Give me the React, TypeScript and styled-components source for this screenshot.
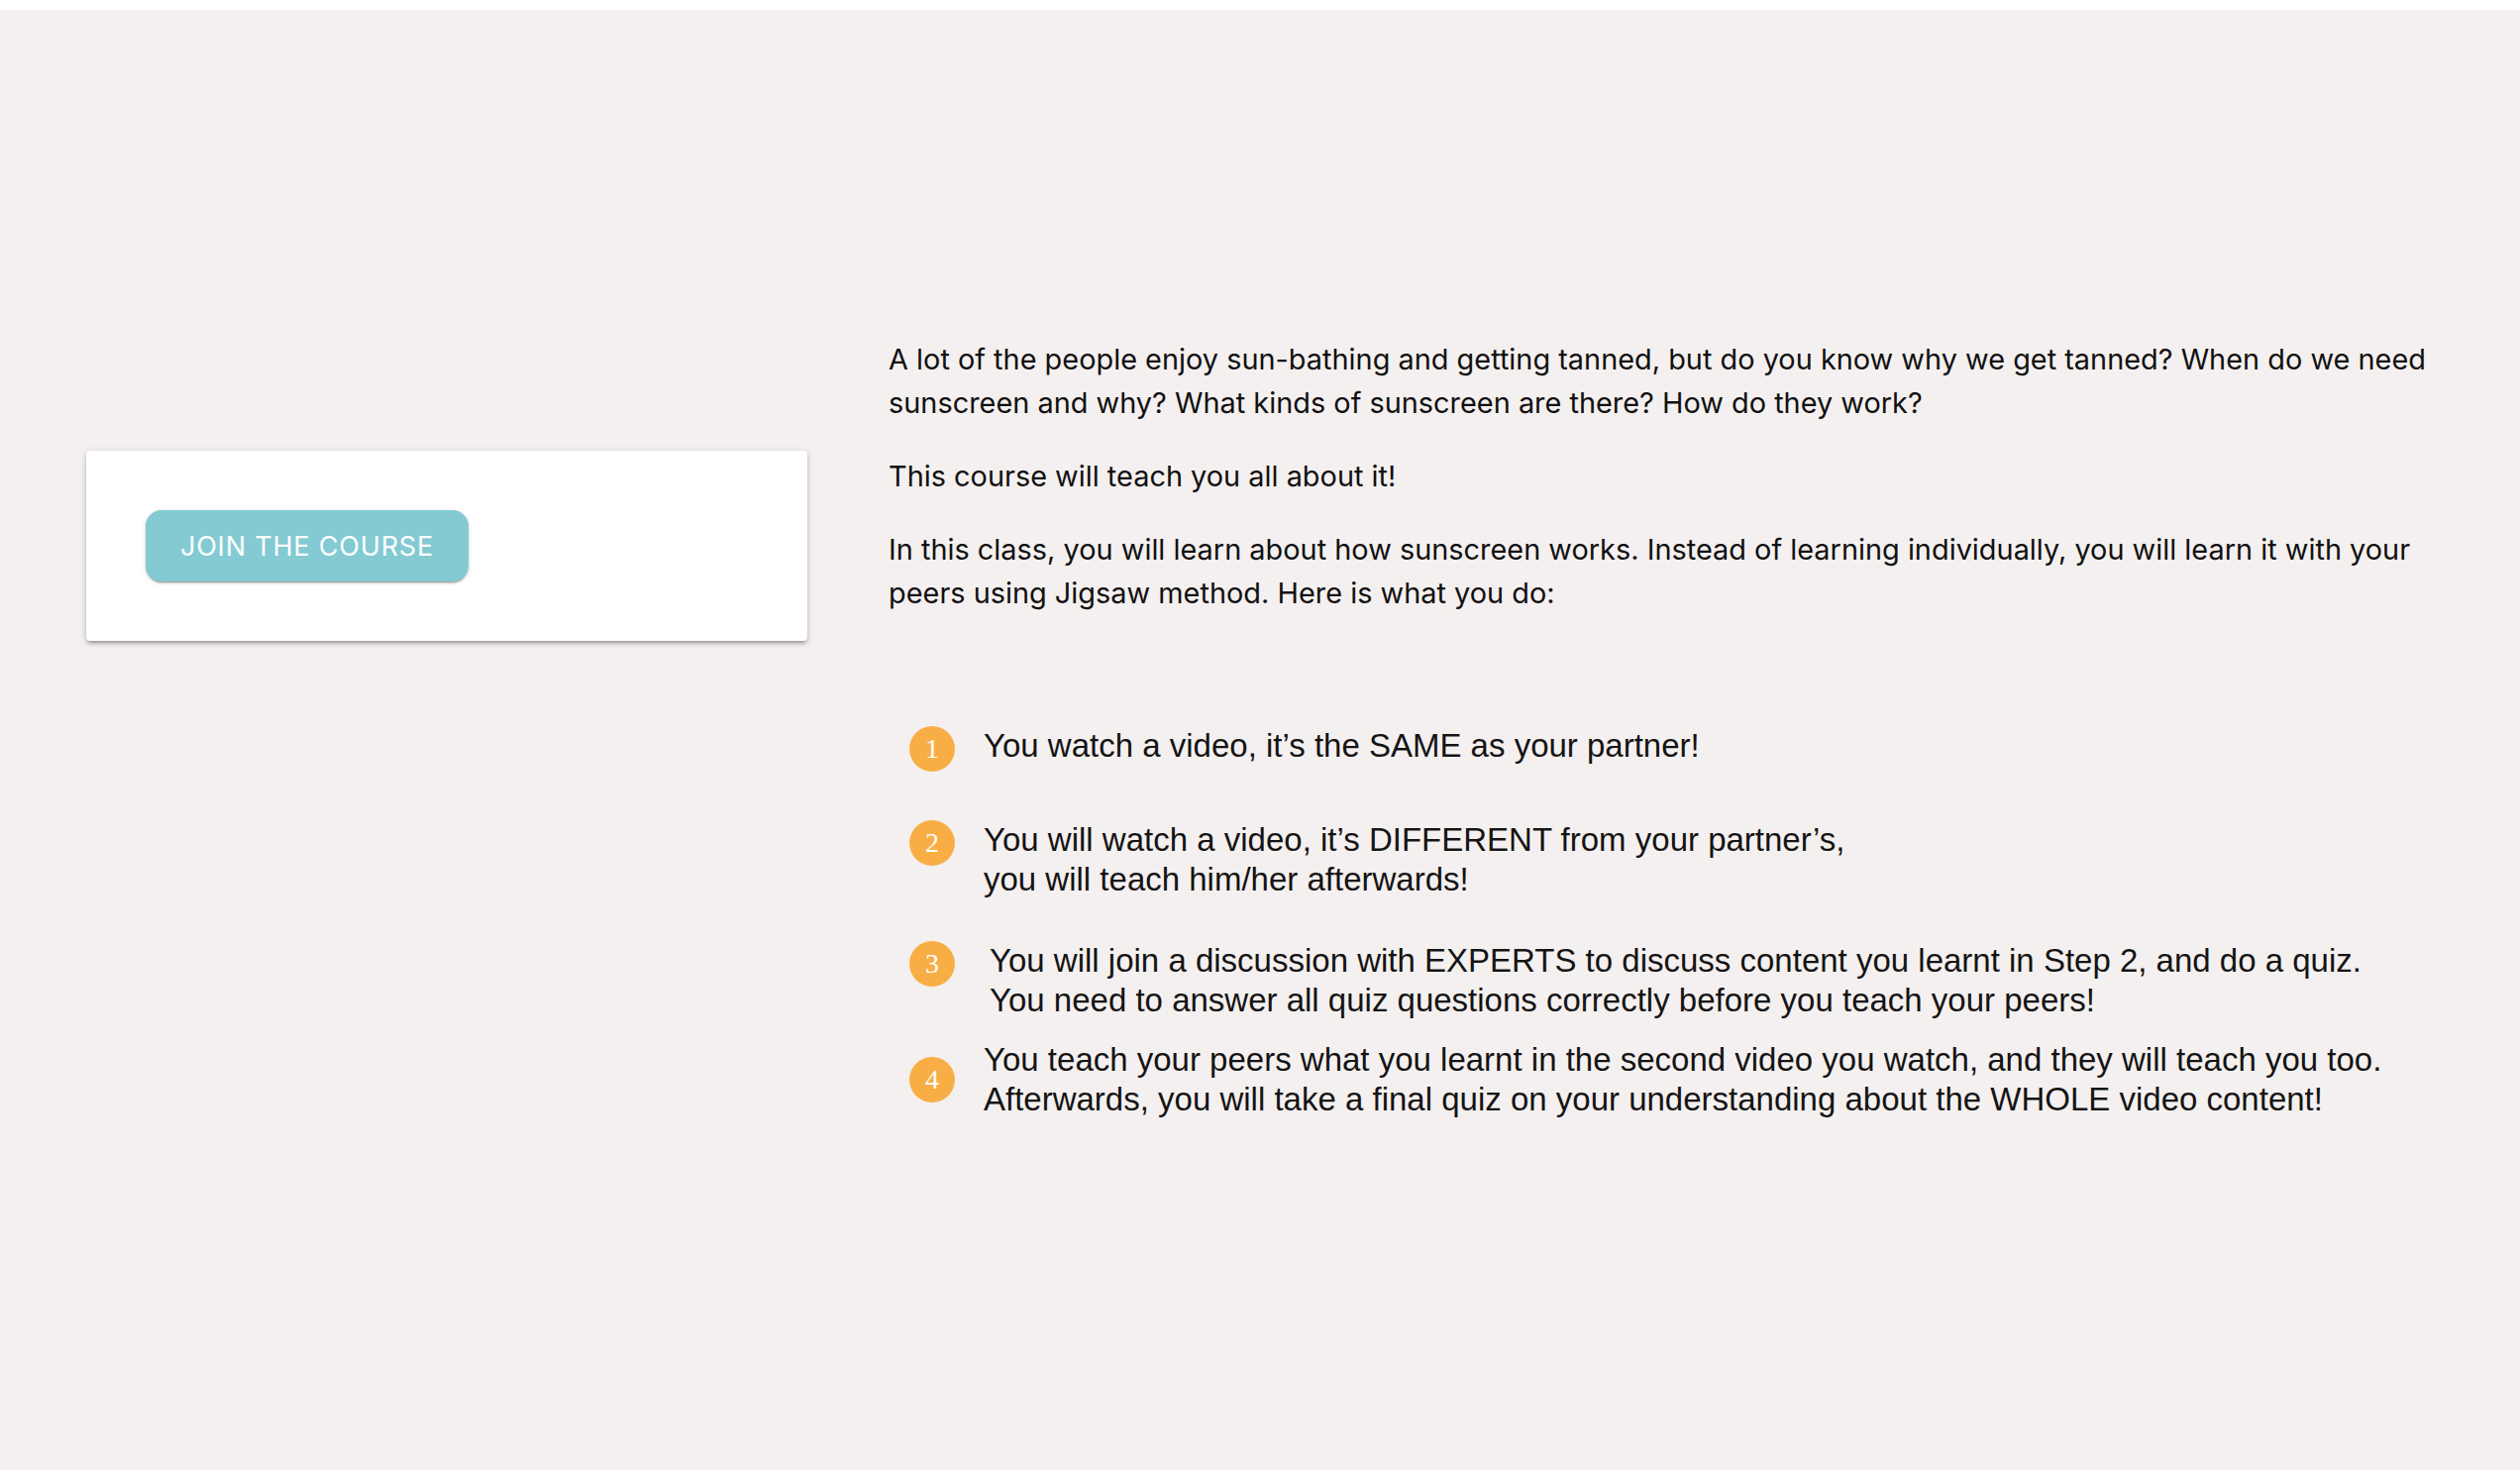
import React from "react";
import styled, { createGlobalStyle } from "styled-components";

const Global = createGlobalStyle`
  html, body { margin: 0; padding: 0; background: #ffffff; }
  body { font-family: Inter, "Noto Sans", sans-serif; }
  * { box-sizing: border-box; }
`;

const Page = styled.div`
  padding-top: 10px;
  background: #ffffff;
`;

const Main = styled.main`
  display: flex;
  align-items: flex-start;
  min-height: 1474px;
  background: #f4f0ef;
  padding: 0 70px 0 87px;
`;

const Side = styled.aside`
  flex: 0 0 728px;
  margin-top: 445px;
`;

const Card = styled.div`
  background: #ffffff;
  border-radius: 4px;
  padding: 60px;
  box-shadow: 0 3px 3px -2px rgba(0, 0, 0, 0.25), 0 3px 4px 0 rgba(0, 0, 0, 0.18),
    0 1px 8px 0 rgba(0, 0, 0, 0.1);
`;

const JoinButton = styled.button`
  display: inline-flex;
  align-items: center;
  justify-content: center;
  height: 72px;
  width: 326px;
  border: none;
  border-radius: 16px;
  background: #83cad2;
  color: #ffffff;
  font-family: Inter, Roboto, sans-serif;
  font-size: 27px;
  font-weight: 400;
  letter-spacing: 0.03em;
  text-transform: uppercase;
  cursor: pointer;
  box-shadow: 0 3px 1px -2px rgba(0, 0, 0, 0.2), 0 2px 2px 0 rgba(0, 0, 0, 0.14),
    0 1px 5px 0 rgba(0, 0, 0, 0.12);
`;

const Content = styled.section`
  flex: 1 1 auto;
  margin-left: 82px;
  padding-top: 331px;
`;

const Para = styled.p`
  margin: 0 0 30px;
  font-family: Inter, "Noto Sans", sans-serif;
  font-size: 28.9px;
  line-height: 44px;
  color: #111111;
`;

const Steps = styled.ol`
  list-style: none;
  margin: 112px 0 0;
  padding: 0 0 0 21px;
`;

const Step = styled.li<{ $gap: number; $center?: boolean }>`
  display: flex;
  align-items: ${(p) => (p.$center ? "center" : "flex-start")};
  margin-top: ${(p) => p.$gap}px;
  font-family: "Liberation Sans", Arial, sans-serif;
  font-size: 33px;
  line-height: 40px;
  color: #141414;
`;

const Badge = styled.span`
  flex: 0 0 46px;
  width: 46px;
  height: 46px;
  border-radius: 50%;
  background: #f8ae45;
  color: #ffffff;
  display: flex;
  align-items: center;
  justify-content: center;
  font-family: "Liberation Serif", "Times New Roman", serif;
  font-size: 28px;
  line-height: 1;
`;

const StepText = styled.span<{ $indent?: number }>`
  margin-left: ${(p) => 29 + (p.$indent ?? 0)}px;
`;

const steps = [
  { gap: 0, lines: ["You watch a video, it’s the SAME as your partner!"] },
  {
    gap: 49,
    lines: [
      "You will watch a video, it’s DIFFERENT from your partner’s,",
      "you will teach him/her afterwards!",
    ],
  },
  {
    gap: 42,
    indent: 6,
    lines: [
      "You will join a discussion with EXPERTS to discuss content you learnt in Step 2, and do a quiz.",
      "You need to answer all quiz questions correctly before you teach your peers!",
    ],
  },
  {
    gap: 20,
    center: true,
    lines: [
      "You teach your peers what you learnt in the second video you watch, and they will teach you too.",
      "Afterwards, you will take a final quiz on your understanding about the WHOLE video content!",
    ],
  },
];

export default function App() {
  return (
    <>
      <Global />
      <Page>
        <Main>
          <Side>
            <Card>
              <JoinButton>Join the course</JoinButton>
            </Card>
          </Side>
          <Content>
            <Para>
              A lot of the people enjoy sun-bathing and getting tanned, but do you know why we get
              tanned? When do we need sunscreen and why? What kinds of sunscreen are there? How do
              they work?
            </Para>
            <Para>This course will teach you all about it!</Para>
            <Para>
              In this class, you will learn about how sunscreen works. Instead of learning
              individually, you will learn it with your peers using Jigsaw method. Here is what you
              do:
            </Para>
            <Steps>
              {steps.map((s, i) => (
                <Step key={i} $gap={s.gap} $center={s.center}>
                  <Badge>{i + 1}</Badge>
                  <StepText $indent={s.indent}>
                    {s.lines.map((l, j) => (
                      <React.Fragment key={j}>
                        {j > 0 && <br />}
                        {l}
                      </React.Fragment>
                    ))}
                  </StepText>
                </Step>
              ))}
            </Steps>
          </Content>
        </Main>
      </Page>
    </>
  );
}
